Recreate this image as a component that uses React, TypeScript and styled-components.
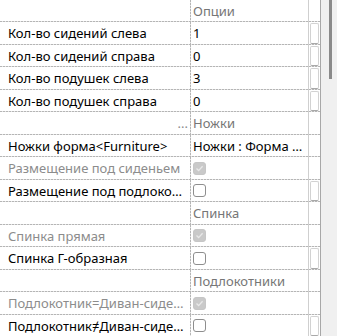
import styled, {createGlobalStyle} from "styled-components";

type RowData = {
  name: string,
  value?: string,
  check?: "on" | "off",
  header?: boolean,
  disabled?: boolean,
  button?: boolean,
  dots?: boolean
}

const rows: RowData[] = [
  {name: "", value: "Опции", header: true},
  {name: "Кол-во сидений слева", value: "1", button: true},
  {name: "Кол-во сидений справа", value: "0", button: true},
  {name: "Кол-во подушек слева", value: "3", button: true},
  {name: "Кол-во подушек справа", value: "0", button: true},
  {name: "", value: "Ножки", header: true, dots: true},
  {name: "Ножки форма<Furniture>", value: "Ножки : Форма круглые"},
  {name: "Размещение под сиденьем", check: "on", disabled: true},
  {name: "Размещение под подлокотником", check: "off", button: true},
  {name: "", value: "Спинка", header: true},
  {name: "Спинка прямая", check: "on", disabled: true},
  {name: "Спинка Г-образная", check: "off", button: true},
  {name: "", value: "Подлокотники", header: true},
  {name: "Подлокотник=Диван-сиденье", check: "on", disabled: true},
  {name: "Подлокотник≠Диван-сиденье", check: "off", button: true}
];

function Check({state}: { state: "on" | "off" }) {
  return (
      <Box $on={state === "on"}>
        {state === "on" &&
        <svg width="9" height="9" viewBox="0 0 9 9">
            <path d="M1.5 4.6 L3.6 6.6 L7.6 2.2" fill="none" stroke="#e8e8e8" strokeWidth="1.4"/>
        </svg>}
      </Box>
  );
}

function App() {
  return (
      <>
        <GlobalStyle/>
        <Frame>
          <Grid>
            {rows.map((row, i) => (
                <Row key={i}>
                  <NameCell $muted={row.disabled} $dots={row.dots}>
                    {row.dots ? "..." : row.name}
                  </NameCell>
                  <ValueCell $muted={row.header}>
                    {row.check ? <Check state={row.check}/> : row.value}
                  </ValueCell>
                  <ButtonCell>
                    {row.button && <EditButton/>}
                  </ButtonCell>
                </Row>
            ))}
          </Grid>
          <Scrollbar>
            <Thumb/>
          </Scrollbar>
        </Frame>
      </>
  );
}

/* CSS */

const GlobalStyle = createGlobalStyle`
  body {
    margin: 0;
    background: #fff;
    font-family: "Noto Sans", "Open Sans", sans-serif;
    font-size: 13px;
    color: #000;
  }
`;

const Frame = styled.div`
  display: flex;
  width: 337px;
  height: 336px;
  overflow: hidden;
`;

const Grid = styled.div`
  display: flex;
  flex-direction: column;
  width: 320px;
  flex-shrink: 0;
  border-right: 1px solid #a8a8a8;
  margin-top: -0.5px;
`;

const Row = styled.div`
  display: grid;
  grid-template-columns: 191px 118px 10px;
  height: 22.5px;
  flex-shrink: 0;
  background: repeating-linear-gradient(90deg, #b5b5b5 0 2px, #e4e4e4 2px 3px) left bottom / 100% 1px no-repeat;
`;

const NameCell = styled.div<{ $muted?: boolean, $dots?: boolean }>`
  padding: 0 3px 0 8px;
  min-width: 0;
  text-align: ${p => p.$dots ? "right" : "left"};
  color: ${p => p.$muted || p.$dots ? "#8c8c8c" : "#000"};
  background: repeating-linear-gradient(180deg, #b5b5b5 0 2px, #e4e4e4 2px 3px) right top / 1px 100% no-repeat;
  white-space: nowrap;
  overflow: hidden;
  text-overflow: ellipsis;
  line-height: 22px;
`;

const ValueCell = styled.div<{ $muted?: boolean }>`
  padding: 0 3px 0 2px;
  min-width: 0;
  color: ${p => p.$muted ? "#767676" : "#000"};
  border-right: 1px solid #cfcfcf;
  white-space: nowrap;
  overflow: hidden;
  text-overflow: ellipsis;
  line-height: 22px;
`;

const ButtonCell = styled.div`
  display: flex;
  align-items: stretch;
  padding: 1px 0 1px 1px;
`;

const EditButton = styled.div`
  flex: 1;
  background: #fff;
  border: 1px solid #d2d2d2;
  border-bottom-color: #a9a9a9;
  border-radius: 2px;
`;

const Box = styled.span<{ $on: boolean }>`
  display: inline-flex;
  align-items: center;
  justify-content: center;
  vertical-align: middle;
  width: 13px;
  height: 13px;
  box-sizing: border-box;
  margin-top: -3px;
  border-radius: 3px;
  border: 1px solid ${p => p.$on ? "#c6c6c6" : "#8e8e8e"};
  background: ${p => p.$on ? "#c9c9c9" : "#fff"};
`;

const Scrollbar = styled.div`
  flex: 1;
  display: flex;
  justify-content: center;
  background: #f0f0f0;
  padding-left: 2px;
`;

const Thumb = styled.div`
  width: 3px;
  height: 79px;
  background: #8a8a8a;
`;

/* CSS */

export default App;
